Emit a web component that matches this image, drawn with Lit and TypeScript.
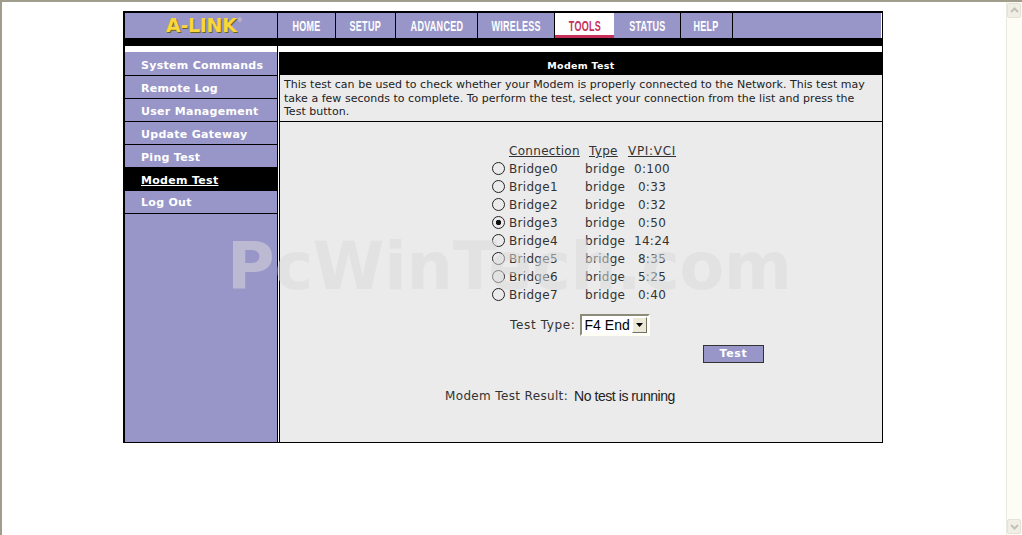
import { LitElement, html, css, svg } from "lit";
import { customElement } from "lit/decorators.js";

const NAV = [
  ["HOME", 58], ["SETUP", 60], ["ADVANCED", 82], ["WIRELESS", 77],
  ["TOOLS", 59], ["STATUS", 67], ["HELP", 52],
] as const;
const SIDE = ["System Commands", "Remote Log", "User Management", "Update Gateway", "Ping Test", "Modem Test", "Log Out"];
const ROWS = [
  ["Bridge0", "0:100"], ["Bridge1", "0:33"], ["Bridge2", "0:32"], ["Bridge3", "0:50"],
  ["Bridge4", "14:24"], ["Bridge5", "8:35"], ["Bridge6", "5:25"], ["Bridge7", "0:40"],
];

@customElement("app-root")
export class AppRoot extends LitElement {
  static styles = css`
    :host { display: block; width: 1022px; height: 535px; overflow: hidden; position: relative; background: #fff;
      font-family: "DejaVu Sans", Verdana, sans-serif; color: #222; }
    .window { display: flex; height: 533px; border-top: 2px solid #a09d8c; }
    .page { flex: 1; padding: 9px 0 0 121px; border-left: 2px solid #a09d8c; box-sizing: border-box; }
    .frame { width: 760px; box-sizing: border-box; border: solid #000; border-width: 2px 1px 1px 2px; }
    .top { display: flex; height: 25px; background: #9896c8; margin-right: 1px; }
    .logo { width: 152px; border-right: 1px solid #000; display: flex; justify-content: center; align-items: center; box-sizing: content-box; }
    .logo b { font: 700 19px "DejaVu Sans", sans-serif; color: #fbd63a; letter-spacing: -.3px; text-shadow: 1px 1px 0 #6a6420; position: relative; top: -1px; left: 3px; }
    .logo sup { font: 6px "Liberation Sans", sans-serif; color: #e8e4c0; position: relative; top: -6px; left: 3px; margin-left: 1px; }
    .tab { box-sizing: border-box; border-right: 1px solid #000; display: flex; justify-content: center; align-items: center; color: #fff; }
    .tab span { font: 700 15px "Liberation Sans", sans-serif; display: inline-block; transform: scaleX(.6); white-space: nowrap; letter-spacing: .5px; position: relative; }
    .tab.on { background: #fff; color: #c8305c; border-bottom: 3px solid #c8305c; border-right: 0; }
    .tab.on span { top: 1px; }
    .fill { flex: 1; }
    .strip { height: 8px; background: #000; margin-right: -1px; }
    .gap { height: 6px; display: grid; grid-template-columns: 152px 1px 1fr; background: #fff; margin-right: 1px; }
    .gap i { background: #000; }
    .body { display: grid; grid-template-columns: 152px 604px; height: 390px; }
    .side { background: #9896c8; border-right: 1px solid #000; display: flex; flex-direction: column; width: 152px; box-sizing: content-box; }
    .side a { height: 22px; border-bottom: 1px solid #000; padding-left: 16px; font: 700 11px/26px "DejaVu Sans", sans-serif; color: #fff; letter-spacing: .3px; display: block; }
    .side a:first-child { height: 23px; line-height: 28px; }
    .side a:last-child { line-height: 24px; }
    .side a.on { background: #000; text-decoration: underline; }
    .main { margin-left: 2px; border-left: 1px solid #000; background: #ebebeb; display: flex; flex-direction: column; width: 603px; box-sizing: border-box; }
    .title { height: 23px; background: #000; color: #fff; font: 700 9.5px/28px "DejaVu Sans", sans-serif; text-align: center; letter-spacing: .3px; }
    .desc { height: 47px; box-sizing: border-box; border-bottom: 1px solid #000; padding: 3px 14px 0 4px; font: 11px/13.5px "DejaVu Sans", sans-serif; letter-spacing: .02px; color: #222; }
    .content { flex: 1; position: relative; padding: 19px 0 0 212px; }
    .table { display: grid; grid-template-columns: 17px 76px 43px 48px; grid-template-rows: 19px; grid-auto-rows: 18px; align-items: center; font: 12px "DejaVu Sans", sans-serif; letter-spacing: .3px; color: #333; }
    .table u { white-space: nowrap; align-self: start; line-height: 18px; margin-top: 1px; }
    .table u.t { margin-left: 4px; }
    .table u.v { letter-spacing: .7px; }
    .table .c { text-align: center; }
    input.radio { appearance: none; -webkit-appearance: none; width: 13px; height: 13px; margin: -1px 0 0; border: 1px solid #222; border-radius: 50%; box-sizing: border-box; background: transparent; display: block; }
    input.radio:checked { background: radial-gradient(circle, #111 0 2.4px, transparent 3px); }
    .type-row { display: flex; align-items: center; margin: 10px 0 0 18px; gap: 4px; font: 12px "DejaVu Sans", sans-serif; letter-spacing: .65px; color: #333; }
    .select { width: 70px; height: 22px; box-sizing: border-box; border: 2px solid; border-color: #8d8c78 #fffff4 #fffff4 #8d8c78; background: #fff; display: flex; align-items: center; justify-content: space-between; font: 14px "Liberation Sans", sans-serif; letter-spacing: 0; color: #000; padding-left: 3px; }
    .arrow { width: 15px; height: 16px; background: #ece9d8; border: 1px solid; border-color: #fff #716f64 #716f64 #fff; box-sizing: border-box; display: flex; align-items: center; justify-content: center; margin-right: 1px; }
    .btn-row { margin: 9px 0 0 211px; }
    button { width: 61px; height: 18px; padding: 0; border: 1px solid #333; background: #9896c8; color: #fff; font: 700 11px/14px "DejaVu Sans", sans-serif; letter-spacing: .7px; display: block; }
    .result { margin: 25px 0 0 -47px; display: flex; align-items: center; white-space: nowrap; font: 12px "DejaVu Sans", sans-serif; letter-spacing: .35px; color: #333; gap: 6px; height: 16px; }
    .result span:last-child { font: 14px "Liberation Sans", sans-serif; letter-spacing: -.45px; color: #222; }
    .mark { position: absolute; left: 227px; top: 232px; font: 700 65px/70px "DejaVu Sans", sans-serif; letter-spacing: -.15px; color: rgba(219,219,219,.52); white-space: nowrap; pointer-events: none; }
    .sb { width: 16px; background: #fdfdf6; border-left: 1px solid #eceade; box-sizing: border-box; display: flex; flex-direction: column; justify-content: space-between; padding: 1px 1px 1px 0; }
    .sb div { height: 15px; background: #f0efe6; border: 1px solid #e4e2d6; border-radius: 2px; box-sizing: border-box; display: flex; align-items: center; justify-content: center; }
  `;

  render() {
    const chev = (d: string) => svg`<svg width="9" height="7" viewBox="0 0 9 7"><path d="${d}" fill="none" stroke="#c4c2b4" stroke-width="2"/></svg>`;
    return html`
      <div class="window">
        <div class="page">
          <div class="frame">
            <div class="top">
              <div class="logo"><b>A-LINK</b><sup>®</sup></div>
              ${NAV.map(([t, w]) => html`<div class="tab ${t === "TOOLS" ? "on" : ""}" style="width:${w}px"><span>${t}</span></div>`)}
              <div class="fill"></div>
            </div>
            <div class="strip"></div>
            <div class="gap"><span></span><i></i><span></span></div>
            <div class="body">
              <nav class="side">
                ${SIDE.map((s) => html`<a class="${s === "Modem Test" ? "on" : ""}">${s}</a>`)}
              </nav>
              <main class="main">
                <div class="title">Modem Test</div>
                <div class="desc">This test can be used to check whether your Modem is properly connected to the Network. This test may take a few seconds to complete. To perform the test, select your connection from the list and press the Test button.</div>
                <div class="content">
                  <div class="table">
                    <span></span><u>Connection</u><u class="t">Type</u><u class="v">VPI:VCI</u>
                    ${ROWS.map(([n, v], i) => html`
                      <input class="radio" type="radio" name="c" ?checked=${i === 3} />
                      <span>${n}</span><span>bridge</span><span class="c">${v}</span>`)}
                  </div>
                  <div class="type-row">
                    <span>Test Type:</span>
                    <div class="select"><span>F4 End</span><span class="arrow"><svg width="7" height="4" viewBox="0 0 7 4"><path d="M0 0h7L3.5 4z" fill="#000"/></svg></span></div>
                  </div>
                  <div class="btn-row"><button>Test</button></div>
                  <div class="result"><span>Modem Test Result:</span><span>No test is running</span></div>
                </div>
              </main>
            </div>
          </div>
        </div>
        <div class="sb">
          <div>${chev("M1 5l3.5-3.5L8 5")}</div>
          <div>${chev("M1 2l3.5 3.5L8 2")}</div>
        </div>
      </div>
      <div class="mark">PcWinTech.com</div>
    `;
  }
}
